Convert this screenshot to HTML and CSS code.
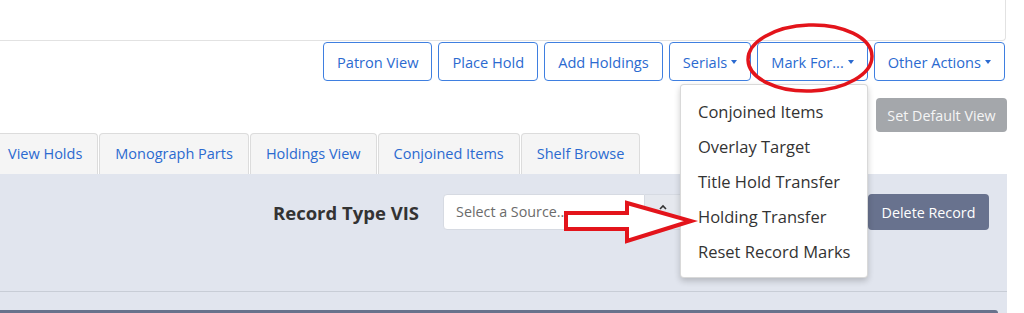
FILE: index.html
```html
<!DOCTYPE html>
<html lang="en">
<head>
  <meta charset="UTF-8" />
  <meta name="viewport" content="width=device-width, initial-scale=1.0"/>
  <title>Record Detail</title>
  <link rel="stylesheet" href="styles.css">
</head>

<body>
  <div class="page">
    <div class="header-card"></div>

    <div class="actions">
      <button class="btn-outline" type="button">Patron View</button>
      <button class="btn-outline" type="button">Place Hold</button>
      <button class="btn-outline" type="button">Add Holdings</button>
      <button class="btn-outline" type="button">Serials<span class="caret"></span></button>
      <button class="btn-outline" type="button">Mark For...<span class="caret"></span></button>
      <button class="btn-outline" type="button">Other Actions<span class="caret"></span></button>
    </div>

    <div class="view-bar">
      <button class="btn-default-view" type="button">Set Default View</button>
    </div>

    <ul class="tabs">
      <li class="tab">View Holds</li>
      <li class="tab">Monograph Parts</li>
      <li class="tab">Holdings View</li>
      <li class="tab">Conjoined Items</li>
      <li class="tab">Shelf Browse</li>
    </ul>

    <div class="panel">
      <div class="record-row">
        <span class="record-label">Record Type VIS</span>
        <div class="source-group">
          <div class="source-select">Select a Source...</div>
          <div class="source-spin">
            <svg width="10" height="22" viewBox="0 0 10 22">
              <path d="M2 8 L5 5 L8 8" fill="none" stroke="#333" stroke-width="1.6"/>
              <path d="M2 14 L5 17 L8 14" fill="none" stroke="#333" stroke-width="1.6"/>
            </svg>
          </div>
        </div>
        <button class="btn-delete" type="button">Delete Record</button>
      </div>
      <div class="panel-rule"></div>
      <div class="dark-bar"></div>
    </div>
  </div>

  <ul class="mark-menu">
    <li>Conjoined Items</li>
    <li>Overlay Target</li>
    <li>Title Hold Transfer</li>
    <li>Holding Transfer</li>
    <li>Reset Record Marks</li>
  </ul>

  <!-- annotation marks drawn over the screenshot -->
  <svg class="annotation" width="1024" height="313" viewBox="0 0 1024 313">
    <ellipse cx="810" cy="58" rx="62" ry="33" fill="none" stroke="#e3141b" stroke-width="3.5" transform="rotate(-2 810 58)"/>
    <polygon points="566,213 627,213 627,203 691,221 627,241 627,229 566,229" fill="#fff" stroke="#e3141b" stroke-width="4" stroke-linejoin="miter"/>
  </svg>
</body>
</html>
```

FILE: styles.css
```css
* {
  box-sizing: border-box;
}

html, body {
  margin: 0;
  padding: 0;
  overflow: hidden;
}

body {
  position: relative;
  height: 313px;
  background: #fff;
  color: #333;
  font-family: "Open Sans", "Noto Sans", sans-serif;
}

.page {
  width: 1007px;
}

.header-card {
  width: 1006px;
  height: 41px;
  border-right: 1px solid #e2e2e2;
  border-bottom: 1px solid #e2e2e2;
  border-bottom-right-radius: 4px;
}

.actions {
  display: flex;
  justify-content: flex-end;
  gap: 6px;
  margin-top: 1px;
  padding-right: 2px;
}

.btn-outline {
  display: flex;
  align-items: center;
  height: 39px;
  padding: 0 13px;
  border: 1px solid #3f7fe0;
  border-radius: 4px;
  background: #fff;
  color: #2b6ad0;
  font-family: "Open Sans", sans-serif;
  font-size: 14.6px;
}

.caret {
  display: inline-block;
  margin-left: 4px;
  border-top: 4px solid #2b6ad0;
  border-left: 3.5px solid transparent;
  border-right: 3.5px solid transparent;
}

.view-bar {
  display: flex;
  justify-content: flex-end;
  margin-top: 17px;
}

.btn-default-view {
  height: 34px;
  width: 131px;
  padding: 0;
  border: none;
  border-radius: 4px;
  background: #a4a7ab;
  color: #f5f5f5;
  font-family: "Open Sans", sans-serif;
  font-size: 14.3px;
}

.tabs {
  display: flex;
  gap: 1px;
  list-style: none;
  margin: 1px 0 0 -8px;
  padding: 0;
}

.tab {
  height: 41px;
  line-height: 40px;
  padding: 0 15px;
  border: 1px solid #dcdcdc;
  border-bottom: none;
  border-radius: 4px 4px 0 0;
  background: #f5f5f5;
  color: #2b6ad0;
  font-size: 14.5px;
}

.panel {
  height: 139px;
  background: #e1e5ee;
  padding-top: 20px;
}

.record-row {
  display: flex;
  align-items: center;
  height: 36px;
  padding-left: 273px;
  padding-right: 18px;
}

.record-label {
  font-size: 18.5px;
  font-weight: 700;
  color: #333;
  margin-right: 24px;
}

.source-group {
  display: flex;
  height: 36px;
}

.source-select {
  width: 202px;
  height: 36px;
  line-height: 34px;
  padding-left: 12px;
  background: #fff;
  border: 1px solid #d6dae2;
  border-radius: 4px 0 0 4px;
  color: #6b6b6b;
  font-size: 14.3px;
}

.source-spin {
  display: flex;
  align-items: center;
  justify-content: center;
  width: 36px;
  height: 36px;
  background: #e5e8ee;
  border: 1px solid #d6dae2;
  border-left: none;
}

.btn-delete {
  margin-left: auto;
  width: 121px;
  height: 36px;
  padding: 0;
  border: none;
  border-radius: 4px;
  background: #68728e;
  color: #fff;
  font-family: "Open Sans", sans-serif;
  font-size: 14.3px;
}

.panel-rule {
  margin-top: 61px;
  height: 1px;
  background: #c8cdd6;
}

.dark-bar {
  margin-top: 18px;
  width: 998px;
  height: 3px;
  background: #68728c;
  border-radius: 0 4px 0 0;
}

.mark-menu {
  position: absolute;
  left: 680px;
  top: 84px;
  width: 188px;
  margin: 0;
  padding: 9px 0 8px;
  list-style: none;
  background: #fff;
  border: 1px solid rgba(0, 0, 0, 0.15);
  border-radius: 4px;
  box-shadow: 0 3px 6px rgba(0, 0, 0, 0.2);
}

.mark-menu li {
  height: 35px;
  line-height: 35px;
  padding-left: 17px;
  font-size: 16.5px;
  color: #333;
  white-space: nowrap;
}

.annotation {
  position: absolute;
  left: 0;
  top: 0;
  pointer-events: none;
}
```
